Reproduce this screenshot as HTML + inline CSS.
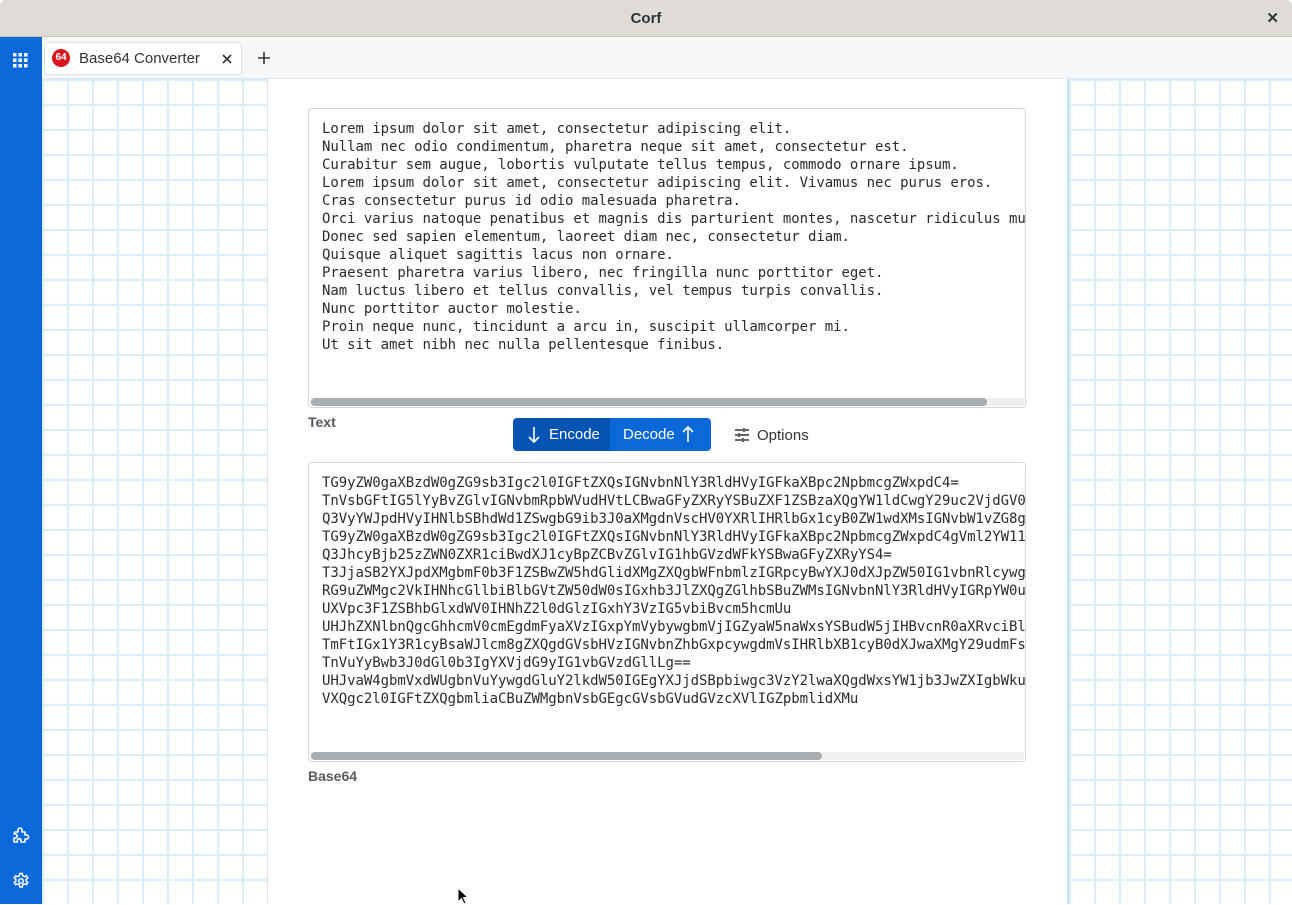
<!DOCTYPE html>
<html><head><meta charset="utf-8"><style>
*{box-sizing:border-box;margin:0;padding:0}
body{width:1292px;height:904px;overflow:hidden;font-family:"Liberation Sans",sans-serif;background:#fff;position:relative}
.title{position:absolute;left:0;top:0;width:1292px;height:37px;background:#dfdcd8;border-bottom:1px solid #c8c2bb;border-radius:6px 6px 0 0;text-align:center;font:bold 15px/37px "Liberation Sans",sans-serif;color:#2e3436}
.close{position:absolute;right:13px;top:0;font:bold 15px/37px "Liberation Sans";color:#2e3436}
.side{position:absolute;left:0;top:37px;width:42px;height:867px;background:#0b68d9}
.tabbar{position:absolute;left:42px;top:37px;width:1250px;height:42px;background:#f6f7f9;border-bottom:1px solid #e2e6ea}
.tab{position:absolute;left:2px;top:5px;width:198px;height:33px;background:#fff;border:1px solid #dde1e6;border-radius:4px}
.grid{position:absolute;top:79px;height:825px;background-color:#fff;background-image:linear-gradient(to right,#d8eefa 2px,transparent 2px),linear-gradient(to bottom,#d8eefa 2px,transparent 2px);background-size:25px 25px}
.ta{position:absolute;left:308px;width:718px;height:300px;border:1px solid #d3d7dc;border-radius:4px;background:#fff;overflow:hidden}
.ta pre{position:absolute;left:13px;top:11px;font:14px/18px "DejaVu Sans Mono",monospace;letter-spacing:-0.05px;color:#2b2b2b;white-space:pre}
.sb{position:absolute;left:1px;right:1px;bottom:1px;height:8px;background:#efefef}
.sb div{position:absolute;left:1px;top:0;height:8px;background:#a9adb0;border-radius:4px}
.lbl{position:absolute;left:308px;font:bold 14px "Liberation Sans",sans-serif;color:#555a61}
</style></head><body>
<div class="title">Corf<span class="close">✕</span></div>
<div class="side">
<svg style="position:absolute;left:13px;top:16px" width="15" height="15" viewBox="0 0 15 15" fill="#fff"><rect x="0" y="0" width="3.5" height="3.5"/><rect x="5.5" y="0" width="3.5" height="3.5"/><rect x="11" y="0" width="3.5" height="3.5"/><rect x="0" y="5.5" width="3.5" height="3.5"/><rect x="5.5" y="5.5" width="3.5" height="3.5"/><rect x="11" y="5.5" width="3.5" height="3.5"/><rect x="0" y="11" width="3.5" height="3.5"/><rect x="5.5" y="11" width="3.5" height="3.5"/><rect x="11" y="11" width="3.5" height="3.5"/></svg>
<svg style="position:absolute;left:12px;top:789px" width="18" height="18" viewBox="0 0 18 18" fill="none" stroke="#fff" stroke-width="1.6" stroke-linejoin="round"><path d="M3 6h3V4a2 2 0 0 1 4 0v2h3v3h1.5a2 2 0 0 1 0 4H13v3H9v-1.5a1.8 1.8 0 0 0-3.6 0V16H2v-4h1.2a2 2 0 0 0 0-4H2z"/></svg>
<svg style="position:absolute;left:12px;top:835px" width="18" height="18" viewBox="0 0 24 24" fill="none" stroke="#fff" stroke-width="2"><circle cx="12" cy="12" r="3"/><path d="M10.3 2h3.4l.6 3 2.2 1.2 2.8-1.1 1.7 2.9-2.3 2v2l2.3 2-1.7 2.9-2.8-1.1-2.2 1.2-.6 3h-3.4l-.6-3-2.2-1.2-2.8 1.1-1.7-2.9 2.3-2v-2l-2.3-2 1.7-2.9 2.8 1.1 2.2-1.2z"/></svg>
</div>
<div class="tabbar">
<div class="tab">
<div style="position:absolute;left:7px;top:6px;width:18px;height:18px;border-radius:50%;background:#d8161b;color:#fff;font:bold 10px/18px 'Liberation Sans';text-align:center">64</div>
<div style="position:absolute;left:34px;top:0;font:15px/32px 'Liberation Sans',sans-serif;color:#333">Base64 Converter</div>
<svg style="position:absolute;left:177px;top:11px" width="10" height="10" viewBox="0 0 10 10" stroke="#333" stroke-width="1.6"><path d="M1 1l8 8M9 1l-8 8"/></svg>
</div>
<svg style="position:absolute;left:216px;top:15px" width="12" height="12" viewBox="0 0 12 12" stroke="#333" stroke-width="1.6"><path d="M6 0v12M0 6h12"/></svg>
</div>
<div class="grid" style="left:42px;width:226px;border-right:1px solid #dde5ec"></div>
<div class="grid" style="left:1067px;width:225px;border-left:2px solid #c6e0f6"></div>
<div class="ta" style="top:108px"><pre>Lorem ipsum dolor sit amet, consectetur adipiscing elit.
Nullam nec odio condimentum, pharetra neque sit amet, consectetur est.
Curabitur sem augue, lobortis vulputate tellus tempus, commodo ornare ipsum.
Lorem ipsum dolor sit amet, consectetur adipiscing elit. Vivamus nec purus eros.
Cras consectetur purus id odio malesuada pharetra.
Orci varius natoque penatibus et magnis dis parturient montes, nascetur ridiculus mus.
Donec sed sapien elementum, laoreet diam nec, consectetur diam.
Quisque aliquet sagittis lacus non ornare.
Praesent pharetra varius libero, nec fringilla nunc porttitor eget.
Nam luctus libero et tellus convallis, vel tempus turpis convallis.
Nunc porttitor auctor molestie.
Proin neque nunc, tincidunt a arcu in, suscipit ullamcorper mi.
Ut sit amet nibh nec nulla pellentesque finibus.</pre><div class="sb"><div style="width:676px"></div></div></div>
<div class="lbl" style="top:414px">Text</div>
<div style="position:absolute;left:513px;top:418px;width:198px;height:33px;border-radius:4px;overflow:hidden;font:15px/33px 'Liberation Sans',sans-serif;color:#fff">
<div style="position:absolute;left:0;top:0;width:97px;height:33px;background:#0553b3"><svg style="position:absolute;left:15px;top:9px" width="12" height="16" viewBox="0 0 12 16" fill="none" stroke="#fff" stroke-width="1.6"><path d="M6 0v15M1 10l5 5 5-5"/></svg><span style="position:absolute;left:36px">Encode</span></div>
<div style="position:absolute;left:97px;top:0;width:101px;height:33px;background:#0b68d9"><span style="position:absolute;left:13px">Decode</span><svg style="position:absolute;left:72px;top:8px" width="12" height="16" viewBox="0 0 12 16" fill="none" stroke="#fff" stroke-width="1.6"><path d="M6 16V1M1 6l5-5 5 5"/></svg></div>
</div>
<svg style="position:absolute;left:735px;top:428px" width="14" height="14" viewBox="0 0 14 14" stroke="#333" stroke-width="1.5"><path d="M0 2h8M10 2h4M0 7h3M5 7h9M0 12h7M9 12h5M9 0v4M4 5v4M8 10v4"/></svg>
<div style="position:absolute;left:757px;top:427px;font:15px 'Liberation Sans',sans-serif;color:#333">Options</div>
<div class="ta" style="top:462px"><pre>TG9yZW0gaXBzdW0gZG9sb3Igc2l0IGFtZXQsIGNvbnNlY3RldHVyIGFkaXBpc2NpbmcgZWxpdC4=
TnVsbGFtIG5lYyBvZGlvIGNvbmRpbWVudHVtLCBwaGFyZXRyYSBuZXF1ZSBzaXQgYW1ldCwgY29uc2VjdGV0dXIgZXN0Lg==
Q3VyYWJpdHVyIHNlbSBhdWd1ZSwgbG9ib3J0aXMgdnVscHV0YXRlIHRlbGx1cyB0ZW1wdXMsIGNvbW1vZG8gb3JuYXJlIGlwc3VtLg==
TG9yZW0gaXBzdW0gZG9sb3Igc2l0IGFtZXQsIGNvbnNlY3RldHVyIGFkaXBpc2NpbmcgZWxpdC4gVml2YW11cyBuZWMgcHVydXMgZXJvcy4=
Q3JhcyBjb25zZWN0ZXR1ciBwdXJ1cyBpZCBvZGlvIG1hbGVzdWFkYSBwaGFyZXRyYS4=
T3JjaSB2YXJpdXMgbmF0b3F1ZSBwZW5hdGlidXMgZXQgbWFnbmlzIGRpcyBwYXJ0dXJpZW50IG1vbnRlcywgbmFzY2V0dXIgcmlkaWN1bHVzIG11cy4=
RG9uZWMgc2VkIHNhcGllbiBlbGVtZW50dW0sIGxhb3JlZXQgZGlhbSBuZWMsIGNvbnNlY3RldHVyIGRpYW0u
UXVpc3F1ZSBhbGlxdWV0IHNhZ2l0dGlzIGxhY3VzIG5vbiBvcm5hcmUu
UHJhZXNlbnQgcGhhcmV0cmEgdmFyaXVzIGxpYmVybywgbmVjIGZyaW5naWxsYSBudW5jIHBvcnR0aXRvciBlZ2V0Lg==
TmFtIGx1Y3R1cyBsaWJlcm8gZXQgdGVsbHVzIGNvbnZhbGxpcywgdmVsIHRlbXB1cyB0dXJwaXMgY29udmFsbGlzLg==
TnVuYyBwb3J0dGl0b3IgYXVjdG9yIG1vbGVzdGllLg==
UHJvaW4gbmVxdWUgbnVuYywgdGluY2lkdW50IGEgYXJjdSBpbiwgc3VzY2lwaXQgdWxsYW1jb3JwZXIgbWku
VXQgc2l0IGFtZXQgbmliaCBuZWMgbnVsbGEgcGVsbGVudGVzcXVlIGZpbmlidXMu</pre><div class="sb"><div style="width:511px"></div></div></div>
<div class="lbl" style="top:768px">Base64</div>
<svg style="position:absolute;left:457px;top:887px" width="12" height="18" viewBox="0 0 12 18"><path d="M1 1v14l3.5-3.5 2.5 5.5 2-1-2.5-5.5H11z" fill="#000" stroke="#fff" stroke-width="1"/></svg>
</body></html>
